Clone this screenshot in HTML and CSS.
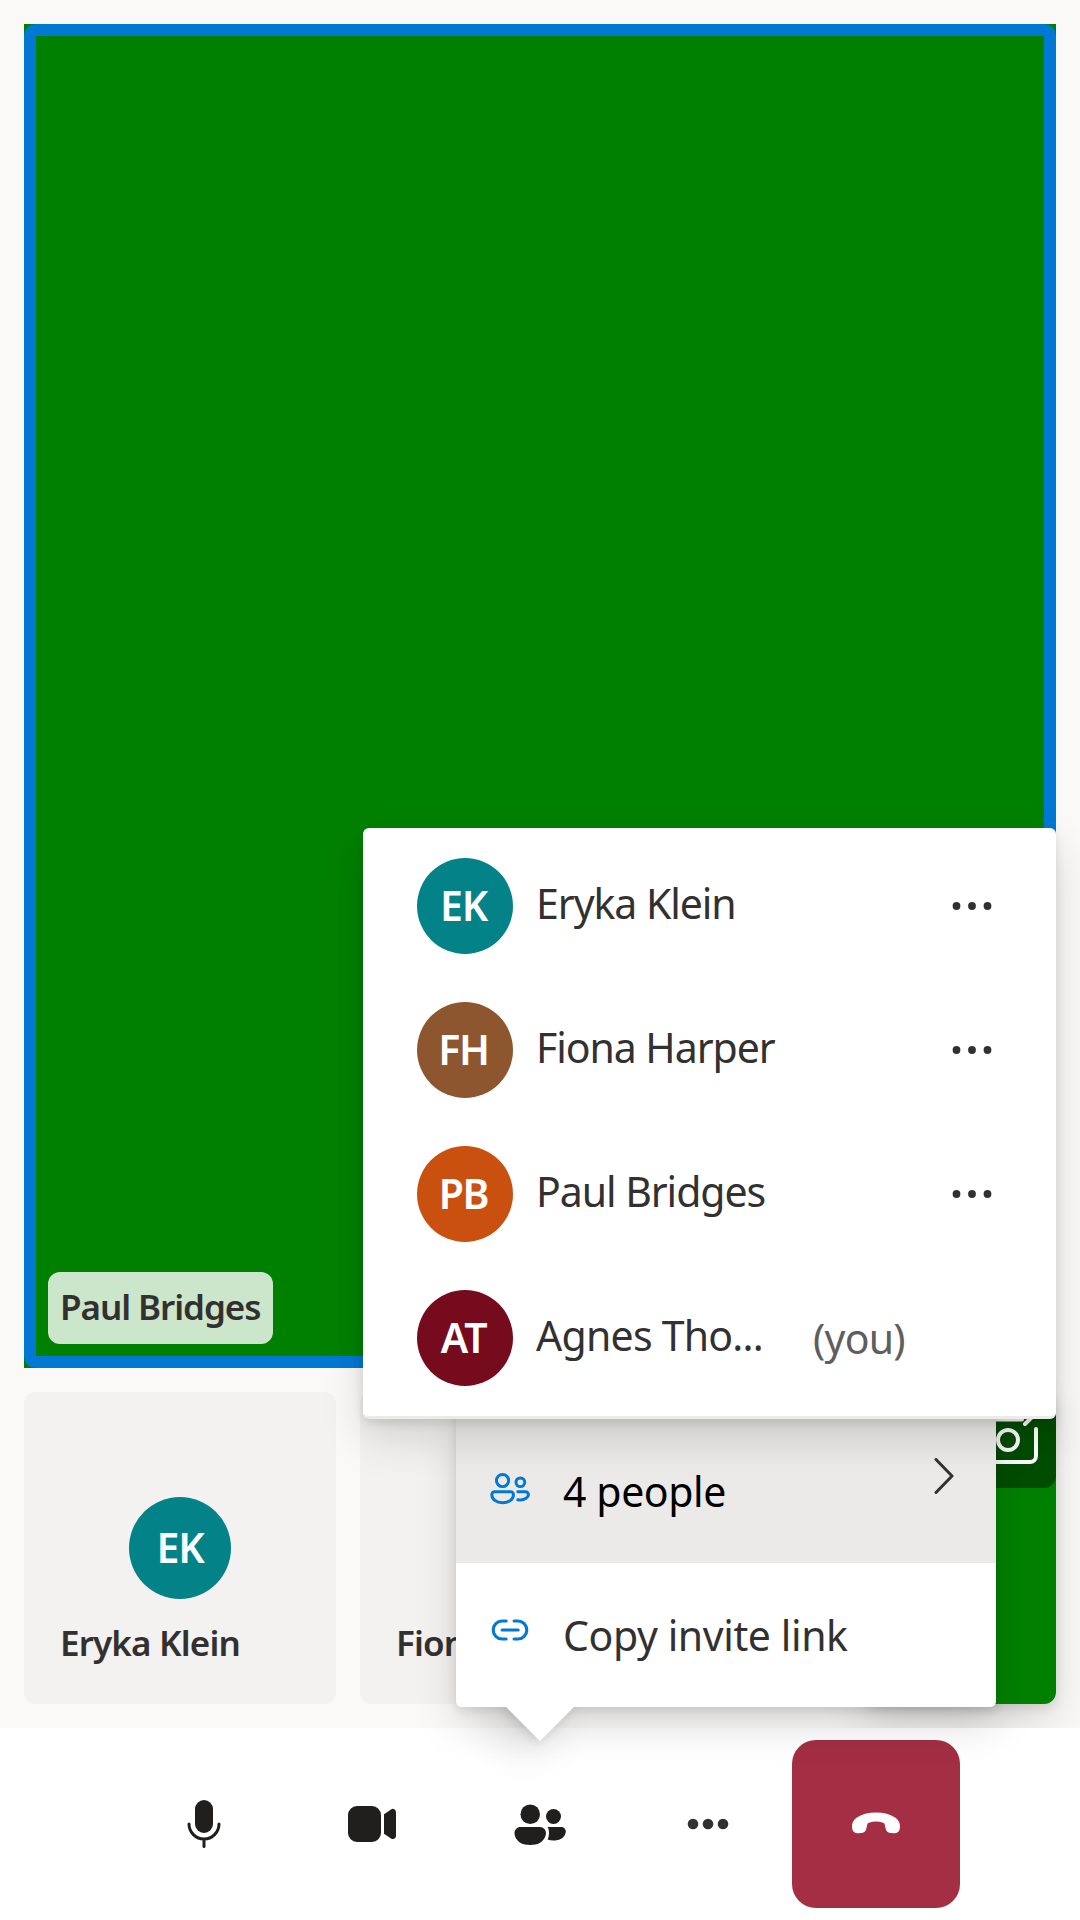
FILE: index.html
```html
<!DOCTYPE html>
<html lang="en">
<head>
<meta charset="utf-8">
<title>Call</title>
<link rel="stylesheet" href="styles.css">
</head>
<body>
<div class="call">
  <main class="gallery">
    <section class="speaker">
      <span class="nameplate">Paul Bridges</span>
    </section>
    <section class="strip">
      <div class="tile"><span class="avatar avatar-large teal">EK</span><span class="tile-name">Eryka Klein</span></div>
      <div class="tile"><span class="avatar avatar-large brown">FH</span><span class="tile-name">Fiona Harper</span></div>
      <div class="local">
        <button class="switch-camera" aria-label="Switch camera">
          <svg viewBox="0 0 60 60" fill="none" stroke="#fff" stroke-width="4" stroke-linecap="round"><circle cx="30" cy="30" r="10"/><path d="M44 9.500H10a8 8 0 0 0-8 8v28.500a6 6 0 0 0 6 6h44a6 6 0 0 0 6-6V19M47 14l9-9"/></svg>
        </button>
      </div>
    </section>
  </main>
  <footer class="controls">
    <button class="control" aria-label="Microphone"><svg viewBox="0 0 20 20"><path d="M10 13a3 3 0 0 0 3-3V5a3 3 0 0 0-6 0v5a3 3 0 0 0 3 3Z"/><path d="M5 10a5 5 0 0 0 10 0M10 15v2.5" fill="none" stroke="#201f1e" stroke-linecap="round"/></svg></button>
    <button class="control" aria-label="Camera"><svg viewBox="0 0 20 20"><path d="M5 4a3 3 0 0 0-3 3v6a3 3 0 0 0 3 3h5a3 3 0 0 0 3-3V7a3 3 0 0 0-3-3H5Zm9 2.75v6.5l2.35 1.6A1.06 1.06 0 0 0 18 14V6a1.06 1.06 0 0 0-1.65-.87L14 6.75Z"/></svg></button>
    <button class="control" aria-label="People"><svg viewBox="0 0 20 20"><circle cx="6.75" cy="6.75" r="3.25"/><circle cx="14.5" cy="7.5" r="2.5"/><path d="M1.5 13c0-1.1.9-2 2-2H10a2 2 0 0 1 2 2s0 4-5.25 4-5.25-4-5.25-4ZM12.55 11H17c.9 0 1.6.7 1.6 1.5 0 0 0 3-4.1 3-.75 0-1.4-.1-1.95-.3.35-.8.45-1.6.45-2.2 0-.8-.15-1.5-.45-2Z"/></svg></button>
    <button class="control" aria-label="More"><svg viewBox="0 0 60 60"><g fill="#323130"><circle cx="15" cy="30" r="5.3"/><circle cx="30" cy="30" r="5.3"/><circle cx="45" cy="30" r="5.3"/></g></svg></button>
    <button class="control hang-up" aria-label="Leave"><svg viewBox="0 0 20 20"><path d="M18 10.9c-.03.5-.1.85-.2 1.1-.25.7-.8 1.05-1.6 1.05l-1.5-.08c-.75-.05-1.2-.45-1.4-1.1l-.45-1.85c-.05-.25-.2-.4-.5-.47A9 9 0 0 0 10 9.15a9 9 0 0 0-2.35.4c-.3.07-.45.22-.5.47L6.7 11.87c-.2.65-.65 1.05-1.4 1.1l-1.5.08c-.8 0-1.35-.35-1.6-1.05-.1-.25-.17-.6-.2-1.1-.05-1.2.4-2.2 1.5-3C5.200 6.800 7.400 6.200 10 6.200s4.800.6 6.500 1.700c1.100.8 1.550 1.800 1.500 3Z"/></svg></button>
  </footer>

  <div class="menu">
    <div class="beak"></div>
    <div class="menu-item active">
      <svg class="menu-icon people-icon" viewBox="0 0 20 20"><circle cx="6.75" cy="6.75" r="2.65"/><circle cx="14.5" cy="7.5" r="1.9"/><path d="M3.500 11.600h6.700a1.300 1.300 0 0 1 1.300 1.300c0 2-1.900 3.500-4.700 3.500S2.100 14.900 2.100 12.900a1.300 1.300 0 0 1 1.400-1.300ZM13.400 11.600h3.300a1.300 1.300 0 0 1 1.300 1.300c0 1.200-1.500 2.300-3.500 2.300-.4 0-.8-.05-1.100-.1"/></svg>
      <span class="menu-label">4 people</span>
      <svg class="chevron" viewBox="0 0 20 36"><path d="M2 1.500 18 18 2 34.500"/></svg>
    </div>
    <div class="menu-item">
      <svg class="menu-icon link-icon" viewBox="0 0 20 20"><path d="M8.400 6.250H6.750a3.750 3.750 0 0 0 0 7.500H8.400M11.700 6.250h1.550a3.750 3.750 0 0 1 0 7.500H11.700M6.700 10h6.700"/></svg>
      <span class="menu-label">Copy invite link</span>
    </div>
  </div>

  <div class="people">
    <div class="person"><span class="avatar teal">EK</span><span class="person-name">Eryka Klein</span><svg class="more" viewBox="0 0 42 12"><circle cx="5.500" cy="6" r="3.900"/><circle cx="21" cy="6" r="3.900"/><circle cx="36.500" cy="6" r="3.900"/></svg></div>
    <div class="person"><span class="avatar brown">FH</span><span class="person-name">Fiona Harper</span><svg class="more" viewBox="0 0 42 12"><circle cx="5.500" cy="6" r="3.900"/><circle cx="21" cy="6" r="3.900"/><circle cx="36.500" cy="6" r="3.900"/></svg></div>
    <div class="person"><span class="avatar orange">PB</span><span class="person-name">Paul Bridges</span><svg class="more" viewBox="0 0 42 12"><circle cx="5.500" cy="6" r="3.900"/><circle cx="21" cy="6" r="3.900"/><circle cx="36.500" cy="6" r="3.900"/></svg></div>
    <div class="person"><span class="avatar maroon">AT</span><span class="person-name self">Agnes Tho...</span><span class="you">(you)</span></div>
  </div>
</div>
</body>
</html>
```
FILE: styles.css
```css
* { box-sizing: border-box; }
body { margin: 0; font-family: "Noto Sans", sans-serif; color: #323130; }
button { border: 0; padding: 0; font: inherit; background: none; }
svg { display: block; }

.call { position: relative; display: flex; flex-direction: column; width: 1080px; height: 1920px; overflow: hidden; background: #faf9f8; }

.gallery { flex: 1; display: flex; flex-direction: column; gap: 24px; padding: 24px; }
.speaker { position: relative; flex: 1; display: flex; align-items: flex-end; padding: 24px; background: #008000; }
.speaker::after { content: ""; position: absolute; inset: 0; border: 12px solid #0078d4; border-radius: 12px; }
.nameplate { width: 225px; height: 72px; padding-left: 12px; border-radius: 12px; background: rgba(255, 255, 255, .8); font-size: 35px; font-weight: 600; line-height: 70px; letter-spacing: -1.05px; white-space: nowrap; }

.strip { display: flex; gap: 24px; height: 312px; }
.tile { display: flex; flex-direction: column; width: 312px; padding: 105px 36px 0; border-radius: 12px; background: #f3f2f1; }
.tile-name { margin-top: 20px; font-size: 35px; font-weight: 600; line-height: 48px; letter-spacing: -.85px; white-space: nowrap; }
.local { display: flex; justify-content: flex-end; width: 192px; margin-left: auto; border-radius: 12px; background: #008000; box-shadow: 0 19px 43px rgba(0, 0, 0, .132), 0 4px 11px rgba(0, 0, 0, .108); }
.switch-camera { display: grid; place-items: center; width: 96px; height: 96px; border-radius: 12px; background: rgba(0, 0, 0, .4); }
.switch-camera svg { width: 60px; height: 60px; }

.avatar { display: grid; place-items: center; flex: none; width: 96px; height: 96px; padding: 0 3px 2px 0; border-radius: 50%; color: #fff; font-size: 41px; font-weight: 600; line-height: 56px; letter-spacing: -1.3px; }
.avatar-large { align-self: center; width: 102px; height: 102px; padding-right: 0; }
.teal { background: #038387; }
.brown { background: #8e562e; }
.orange { background: #ca5010; }
.maroon { background: #750b1c; }

.controls { display: flex; justify-content: center; padding: 12px 0; height: 192px; background: #fff; }
.control { display: grid; place-items: center; width: 168px; height: 168px; border-radius: 24px; }
.control svg { width: 60px; height: 60px; fill: #201f1e; }
.control.hang-up { background: #a42e43; }
.control.hang-up svg { fill: #fff; }

.menu { position: absolute; left: 456px; top: 1407px; width: 540px; padding-top: 12px; border-radius: 6px; background: #ebeae9; box-shadow: 0 19px 43px rgba(0, 0, 0, .132), 0 4px 11px rgba(0, 0, 0, .108); }
.beak { position: absolute; left: 60px; bottom: -24px; width: 48px; height: 48px; background: #fff; transform: rotate(45deg); box-shadow: 0 19px 43px rgba(0, 0, 0, .132), 0 4px 11px rgba(0, 0, 0, .108); }
.menu-item { position: relative; display: flex; height: 144px; padding: 0 42px 0 30px; background: #fff; border-radius: 0 0 6px 6px; }
.menu-item.active { background: #ebeae9; color: #000; border-radius: 0; }
.menu-icon { width: 48px; height: 48px; fill: none; stroke: #0078d4; stroke-width: 1.3; stroke-linecap: round; }
.people-icon { width: 46px; height: 46px; margin: 46px 1px 0; }
.link-icon { margin-top: 43px; }
.menu-label { margin-left: 29px; font-size: 41px; line-height: 144px; letter-spacing: -.4px; white-space: nowrap; }
.chevron { width: 20px; height: 36px; margin: 39px 0 0 auto; fill: none; stroke: #323130; stroke-width: 3; stroke-linecap: round; stroke-linejoin: round; }

.people { position: absolute; left: 363px; top: 828px; width: 693px; height: 591px; padding-top: 6px; border-radius: 6px; border-bottom: 3px solid #ebebe9; background: #fff; box-shadow: 0 19px 43px rgba(0, 0, 0, .132), 0 4px 11px rgba(0, 0, 0, .108); }
.person { display: flex; align-items: center; height: 144px; padding: 0 63px 0 54px; }
.person-name { margin-left: 23px; padding-bottom: 6px; font-size: 41px; line-height: 56px; letter-spacing: -1.05px; white-space: nowrap; }
.person-name.self { letter-spacing: -.75px; }
.more { width: 42px; height: 12px; margin-left: auto; fill: #323130; }
.you { margin-left: 50px; color: #605e5c; font-size: 41px; line-height: 56px; letter-spacing: -.8px; }
```
